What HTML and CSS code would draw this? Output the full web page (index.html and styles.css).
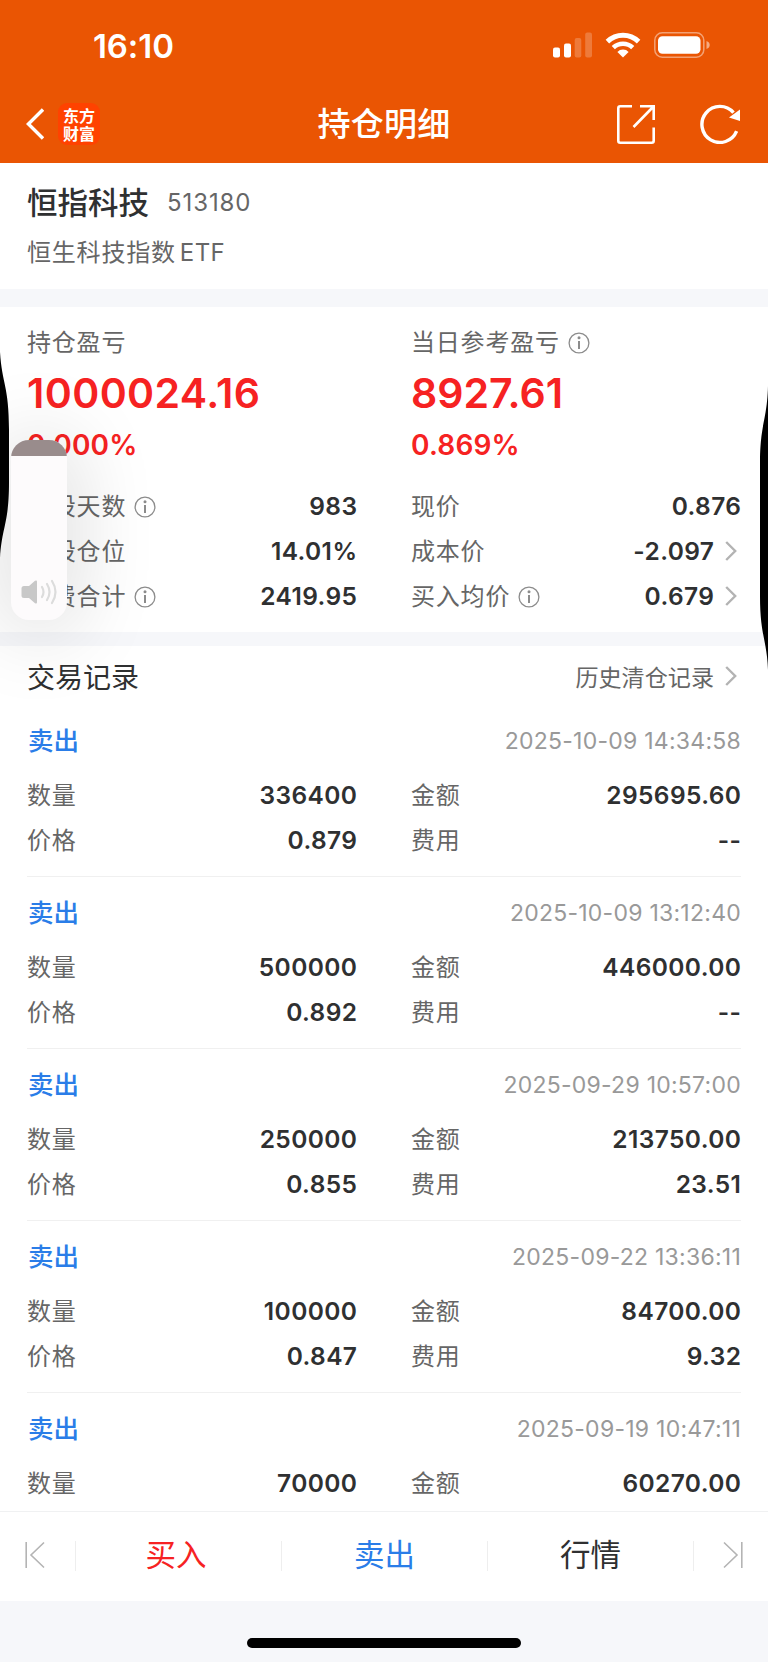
FILE: index.html
```
<!DOCTYPE html>
<html lang="zh-CN">
<head>
    <meta charset="UTF-8">
    <meta name="viewport" content="width=device-width, initial-scale=1.0">
    <title>持仓明细</title>
    <link rel="stylesheet" href="styles.css">
</head>
<body>
    <div class="screen">
        <header class="header">
            <div class="status-bar">
                <div class="clock">16:10</div>
                <div class="status-icons">
                    <svg class="signal" width="40" height="26" viewBox="0 0 40 26" fill="#fff">
                        <rect x="0" y="15.5" width="7" height="10" rx="2"/>
                        <rect x="11" y="11.5" width="7" height="14" rx="2"/>
                        <rect x="21.7" y="6" width="6.6" height="19.5" rx="2" opacity=".22"/>
                        <rect x="32.2" y="0.5" width="6.8" height="25" rx="2" opacity=".22"/>
                    </svg>
                    <svg class="wifi" width="36" height="26" viewBox="0 0 36 26" fill="none" stroke="#fff">
                        <path d="M2.4 9.6a22.4 22.4 0 0 1 31.2 0" stroke-width="5"/>
                        <path d="M8.3 15.6a14 14 0 0 1 19.4 0" stroke-width="4.6"/>
                        <path d="M18 25.4l-5.6-5.5a8 8 0 0 1 11.2 0z" fill="#fff" stroke="none"/>
                    </svg>
                    <svg class="battery" width="57" height="26" viewBox="0 0 57 26">
                        <rect x=".8" y=".8" width="49" height="24.4" rx="7.5" fill="none" stroke="#fff" stroke-width="1.5" opacity=".45"/>
                        <rect x="4" y="4.2" width="42.5" height="17.6" rx="4.5" fill="#fff"/>
                        <path d="M52.5 9q3.2 1.2 3.2 4t-3.2 4z" fill="#fff" opacity=".5"/>
                    </svg>
                </div>
            </div>
            <div class="nav-bar">
                <div class="nav-left">
                    <svg width="18" height="32" viewBox="0 0 18 32" fill="none" stroke="#fff" stroke-width="3.4">
                        <path d="M17 1.5L2.4 16 17 30.5"/>
                    </svg>
                    <div class="app-logo"><span>东方</span><span>财富</span></div>
                </div>
                <h1 class="title">持仓明细</h1>
                <div class="nav-right">
                    <svg width="40" height="40" viewBox="0 0 40 40" fill="none" stroke="#fff" stroke-width="2.6">
                        <path d="M16 2.3H4.3a2 2 0 0 0-2 2v32.4a2 2 0 0 0 2 2h31.4a2 2 0 0 0 2-2V23.5"/>
                        <path d="M24 2.3h13.7V16M37 3L17.5 23"/>
                    </svg>
                    <svg width="42" height="40" viewBox="0 0 42 40" fill="none" stroke="#fff" stroke-width="3.4">
                        <path d="M36.6 27.2A18 18 0 1 1 33.5 8.6"/>
                        <path d="M40 5.5V17l-11-3.5z" fill="#fff" stroke="none"/>
                    </svg>
                </div>
            </div>
        </header>

        <section class="stock">
            <div class="stock-name">恒指科技<span class="stock-code">513180</span></div>
            <div class="stock-full">恒生科技指数<span class="etf">ETF</span></div>
        </section>

        <section class="summary">
            <div class="profit total">
                <div class="label">持仓盈亏</div>
                <div class="amount">1000024.16</div>
                <div class="percent">0.000%</div>
            </div>
            <div class="profit">
                <div class="label">当日参考盈亏<svg class="info" viewBox="0 0 22 22"><use href="#info"/></svg></div>
                <div class="amount">8927.61</div>
                <div class="percent">0.869%</div>
            </div>
            <div class="row"><span class="label">持股天数<svg class="info" viewBox="0 0 22 22"><use href="#info"/></svg></span><span class="value">983</span></div>
            <div class="row"><span class="label">现价</span><span class="value">0.876</span></div>
            <div class="row"><span class="label">持股仓位</span><span class="value">14.01%</span></div>
            <div class="row"><span class="label">成本价</span><span class="value">-2.097<svg class="arrow" viewBox="0 0 12 20"><use href="#arrow"/></svg></span></div>
            <div class="row"><span class="label">税费合计<svg class="info" viewBox="0 0 22 22"><use href="#info"/></svg></span><span class="value">2419.95</span></div>
            <div class="row"><span class="label">买入均价<svg class="info" viewBox="0 0 22 22"><use href="#info"/></svg></span><span class="value">0.679<svg class="arrow" viewBox="0 0 12 20"><use href="#arrow"/></svg></span></div>
        </section>

        <section class="records">
            <div class="records-head">
                <h2>交易记录</h2>
                <div class="history">历史清仓记录<svg class="arrow" viewBox="0 0 12 20"><use href="#arrow"/></svg></div>
            </div>
            <div class="record">
                <div class="record-top"><span class="sell">卖出</span><span class="time">2025-10-09 14:34:58</span></div>
                <div class="row"><span class="label">数量</span><span class="value">336400</span></div>
                <div class="row"><span class="label">金额</span><span class="value">295695.60</span></div>
                <div class="row"><span class="label">价格</span><span class="value">0.879</span></div>
                <div class="row"><span class="label">费用</span><span class="value">--</span></div>
            </div>
            <div class="record">
                <div class="record-top"><span class="sell">卖出</span><span class="time">2025-10-09 13:12:40</span></div>
                <div class="row"><span class="label">数量</span><span class="value">500000</span></div>
                <div class="row"><span class="label">金额</span><span class="value">446000.00</span></div>
                <div class="row"><span class="label">价格</span><span class="value">0.892</span></div>
                <div class="row"><span class="label">费用</span><span class="value">--</span></div>
            </div>
            <div class="record">
                <div class="record-top"><span class="sell">卖出</span><span class="time">2025-09-29 10:57:00</span></div>
                <div class="row"><span class="label">数量</span><span class="value">250000</span></div>
                <div class="row"><span class="label">金额</span><span class="value">213750.00</span></div>
                <div class="row"><span class="label">价格</span><span class="value">0.855</span></div>
                <div class="row"><span class="label">费用</span><span class="value">23.51</span></div>
            </div>
            <div class="record">
                <div class="record-top"><span class="sell">卖出</span><span class="time">2025-09-22 13:36:11</span></div>
                <div class="row"><span class="label">数量</span><span class="value">100000</span></div>
                <div class="row"><span class="label">金额</span><span class="value">84700.00</span></div>
                <div class="row"><span class="label">价格</span><span class="value">0.847</span></div>
                <div class="row"><span class="label">费用</span><span class="value">9.32</span></div>
            </div>
            <div class="record last">
                <div class="record-top"><span class="sell">卖出</span><span class="time">2025-09-19 10:47:11</span></div>
                <div class="row"><span class="label">数量</span><span class="value">70000</span></div>
                <div class="row"><span class="label">金额</span><span class="value">60270.00</span></div>
            </div>
        </section>

        <nav class="tabs">
            <div class="tab-edge">
                <svg width="20" height="28" viewBox="0 0 20 28" fill="none" stroke="#b4b4b4" stroke-width="1.6"><path d="M1.2 1v26M19 1.5L6 14l13 12.5"/></svg>
            </div>
            <div class="tab buy">买入</div>
            <div class="tab sell-tab">卖出</div>
            <div class="tab">行情</div>
            <div class="tab-edge">
                <svg width="20" height="28" viewBox="0 0 20 28" fill="none" stroke="#b4b4b4" stroke-width="1.6"><path d="M18.8 1v26M1 1.5L14 14 1 26.5"/></svg>
            </div>
        </nav>
        <footer class="home-area"><div class="home-bar"></div></footer>

        <!-- volume slider and side button highlights -->
        <svg class="press press-left" width="10" height="210" viewBox="0 0 10 210"><path d="M0 0C2 32 9 34 9 78v52C9 172 2 174 0 206z"/></svg>
        <svg class="press press-right" width="9" height="290" viewBox="0 0 9 290"><path d="M9 0C8 36 1 36 1 80v130c0 40 7 44 8 74z"/></svg>
        <div class="volume">
            <div class="volume-empty"></div>
            <svg width="36" height="26" viewBox="0 0 36 26" fill="none" stroke="#dcdcdc" stroke-width="2.2" stroke-linecap="round">
                <path d="M3 7h5l6-5.2q2-1.2 2 1v20.4q0 2.2-2 1L8 19H3q-2.500 0-2.500-2.500v-7Q.5 7 3 7z" fill="#c8c8c8" stroke="none"/>
                <path d="M21 8q3 5 0 10M26 5q5 8 0 16M31 2q7 11 0 22"/>
            </svg>
        </div>
    </div>

    <svg width="0" height="0" class="defs">
        <symbol id="info" viewBox="0 0 22 22">
            <circle cx="11" cy="11" r="9.900" fill="none" stroke="#8c8c8c" stroke-width="1.300"/>
            <circle cx="11" cy="5.800" r="1.500" fill="#8c8c8c"/>
            <path d="M11 9v8" stroke="#8c8c8c" stroke-width="2"/>
        </symbol>
        <symbol id="arrow" viewBox="0 0 12 20">
            <path d="M1.200 1l9 9-9 9" fill="none" stroke="#b3b3b3" stroke-width="2.400"/>
        </symbol>
    </svg>
</body>
</html>
```
FILE: styles.css
```
* {
    box-sizing: border-box;
}
body {
    margin: 0;
    background-color: #f6f7fa;
    font-family: Inter, "Noto Sans CJK SC", sans-serif;
    color: #2f3031;
}
h1, h2 {
    margin: 0;
}
.defs {
    position: absolute;
}
.screen {
    position: relative;
    width: 768px;
    height: 1662px;
    overflow: hidden;
}
.header {
    height: 163px;
    background-color: #ea5503;
    color: white;
}
.status-bar {
    display: flex;
    justify-content: space-between;
    height: 84px;
    padding: 26px 57px 0 93px;
}
.clock {
    font-size: 33px;
    font-weight: 600;
    line-height: 40px;
    letter-spacing: -0.1px;
}
.status-icons {
    display: flex;
    padding-top: 6px;
}
.wifi {
    margin-left: 12px;
}
.battery {
    margin-left: 13px;
}
.nav-bar {
    display: grid;
    grid-template-columns: 1fr auto 1fr;
    align-items: center;
    height: 79px;
    padding: 0 26px 0 26px;
}
.nav-left, .nav-right {
    display: flex;
    align-items: center;
}
.nav-left {
    gap: 14px;
}
.nav-right {
    justify-content: flex-end;
    gap: 44px;
}
.app-logo {
    display: flex;
    flex-direction: column;
    align-items: center;
    width: 42px;
    height: 42px;
    padding-top: 4px;
    border-radius: 9px;
    background-color: #ff4200;
    font-size: 16px;
    font-weight: 700;
    line-height: 18px;
}
.title {
    font-size: 33px;
    font-weight: 500;
    line-height: 40px;
    letter-spacing: 0.3px;
}
.stock {
    height: 126px;
    padding: 17px 27px 0;
    background-color: white;
}
.stock-name {
    display: flex;
    font-size: 30.5px;
    font-weight: 500;
    line-height: 46px;
}
.stock-code {
    margin-left: 18px;
    font-size: 24px;
    font-weight: 400;
    letter-spacing: 0.9px;
    color: #666;
}
.stock-full {
    margin-top: 7px;
    font-size: 24px;
    line-height: 40px;
    letter-spacing: 0.8px;
    color: #666;
}
.etf {
    margin-left: 4px;
    letter-spacing: 0.4px;
}
.summary {
    display: grid;
    grid-template-columns: 330px 330px;
    column-gap: 54px;
    height: 325px;
    margin-top: 18px;
    padding: 16px 27px 0;
    align-content: start;
    background-color: white;
}
.profit {
    height: 161px;
}
.label {
    display: flex;
    align-items: center;
    font-size: 24px;
    line-height: 40px;
    letter-spacing: 0.8px;
    color: #666;
}
.info {
    width: 22px;
    height: 22px;
    margin-left: 8px;
}
.amount {
    font-size: 41px;
    font-weight: 600;
    line-height: 60px;
    color: #f62222;
}
.total .amount {
    letter-spacing: 0.4px;
}
.percent {
    font-size: 28px;
    font-weight: 600;
    line-height: 44px;
    letter-spacing: 0.2px;
    color: #f62222;
}
.row {
    display: flex;
    justify-content: space-between;
    align-items: center;
    height: 45px;
}
.value {
    display: flex;
    align-items: center;
    margin-right: -0.4px;
    padding-bottom: 2px;
    font-size: 24.5px;
    font-weight: 600;
    letter-spacing: 0.4px;
}
.arrow {
    width: 12px;
    height: 20px;
    margin: 0 4px 0 11px;
}
.records {
    height: 865px;
    margin-top: 14px;
    overflow: hidden;
    background-color: white;
}
.records-head {
    display: flex;
    justify-content: space-between;
    align-items: center;
    height: 59px;
    padding: 1px 27px 0 27px;
}
.records-head h2 {
    font-size: 28px;
    font-weight: 400;
}
.history {
    display: flex;
    align-items: center;
    font-size: 23.1px;
    color: #666;
}
.record {
    display: grid;
    grid-template-columns: 330px 330px;
    column-gap: 54px;
    align-content: start;
    height: 172px;
    margin: 0 27px;
    padding-top: 14px;
    border-bottom: 1px solid #f0f0f0;
}
.last {
    border: none;
}
.record-top {
    grid-column: 1 / 3;
    display: flex;
    justify-content: space-between;
    align-items: center;
    height: 54px;
    padding-bottom: 10px;
}
.sell {
    padding: 0 0 6px 1px;
    font-size: 25.5px;
    font-weight: 500;
    color: #2a7de8;
}
.time {
    font-size: 23px;
    letter-spacing: 0.25px;
    color: #999;
}
.tabs {
    display: flex;
    align-items: center;
    height: 90px;
    border-top: 1px solid #f0f1f2;
    background-color: white;
}
.tab-edge {
    display: flex;
    justify-content: center;
    width: 75px;
    padding: 0 5px 3px 0;
}
.tab-edge:last-child {
    width: 74px;
    padding: 0 0 3px 3px;
}
.tab {
    flex: 1;
    height: 30px;
    margin-bottom: 2px;
    border-left: 1px solid #eee;
    font-size: 30.5px;
    line-height: 28px;
    text-align: center;
}
.tab:nth-child(4) {
    border-right: 1px solid #eee;
}
.buy {
    text-indent: -5px;
    color: #f62222;
}
.sell-tab {
    color: #2a7de8;
}
.home-area {
    display: flex;
    justify-content: center;
    height: 61px;
    padding-top: 37px;
}
.home-bar {
    width: 274px;
    height: 10px;
    border-radius: 5px;
    background-color: black;
}
.press {
    position: absolute;
}
.press-left {
    left: 0;
    top: 352px;
}
.press-right {
    right: 0;
    top: 386px;
}
.volume {
    position: absolute;
    left: 11px;
    top: 440px;
    display: flex;
    flex-direction: column;
    justify-content: space-between;
    align-items: center;
    width: 56px;
    height: 180px;
    padding-bottom: 15px;
    border-radius: 18px;
    overflow: hidden;
    background-color: #fdfbfc;
    box-shadow: 0 6px 80px 10px rgba(0, 0, 0, 0.13);
}
.volume-empty {
    width: 56px;
    height: 16px;
    background-color: #998c8c;
}
```
